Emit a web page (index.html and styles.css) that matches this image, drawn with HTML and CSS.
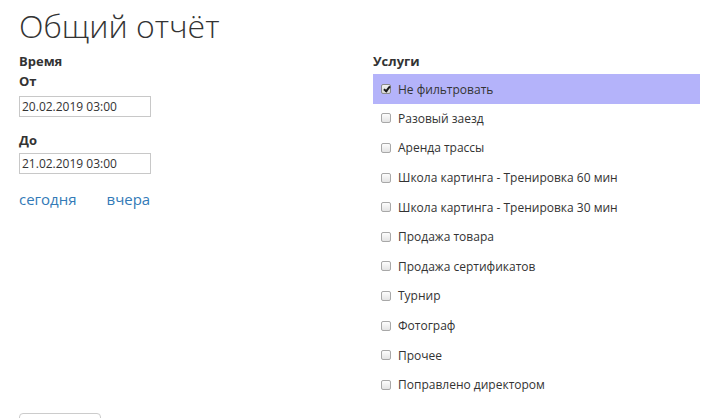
FILE: index.html
```html
<!DOCTYPE html>
<html lang="ru">
<head>
<meta charset="utf-8">
<title>Общий отчёт</title>
<link rel="stylesheet" href="styles.css">
</head>
<body>
<div class="page">
  <h1 class="title">Общий отчёт</h1>
  <div class="columns">
    <div class="col-left">
      <div class="label">Время</div>
      <div class="label">От</div>
      <div class="field field-first"><input class="date-input" type="text" value="20.02.2019 03:00"></div>
      <div class="label label-gap">До</div>
      <div class="field field-second"><input class="date-input" type="text" value="21.02.2019 03:00"></div>
      <div class="quick-links">
        <a class="quick-link" href="#">сегодня</a>
        <a class="quick-link" href="#">вчера</a>
      </div>
    </div>
    <div class="col-right">
      <div class="label">Услуги</div>
      <ul class="service-list">
        <li class="service selected"><span class="cb checked"></span><span class="service-name">Не фильтровать</span></li>
        <li class="service"><span class="cb"></span><span class="service-name">Разовый заезд</span></li>
        <li class="service"><span class="cb"></span><span class="service-name">Аренда трассы</span></li>
        <li class="service"><span class="cb"></span><span class="service-name">Школа картинга - Тренировка 60 мин</span></li>
        <li class="service"><span class="cb"></span><span class="service-name">Школа картинга - Тренировка 30 мин</span></li>
        <li class="service"><span class="cb"></span><span class="service-name">Продажа товара</span></li>
        <li class="service"><span class="cb"></span><span class="service-name">Продажа сертификатов</span></li>
        <li class="service"><span class="cb"></span><span class="service-name">Турнир</span></li>
        <li class="service"><span class="cb"></span><span class="service-name">Фотограф</span></li>
        <li class="service"><span class="cb"></span><span class="service-name">Прочее</span></li>
        <li class="service"><span class="cb"></span><span class="service-name">Поправлено директором</span></li>
      </ul>
    </div>
  </div>
  <button class="submit-btn" type="button">Показать</button>
</div>
</body>
</html>
```

FILE: styles.css
```css
html, body {
  margin: 0;
  padding: 0;
  background: #ffffff;
}

body {
  font-family: "Open Sans", "Noto Sans", sans-serif;
  color: #333333;
  overflow: hidden;
}

.page {
  padding: 0 0 0 19px;
}

.title {
  margin: 6px 0 0;
  font-size: 32px;
  line-height: 40px;
  font-weight: 300;
  color: #333333;
}

.columns {
  display: flex;
  margin-top: 5px;
}

.col-left {
  width: 354px;
}

.col-right {
  width: 327px;
}

.label {
  font-size: 13px;
  line-height: 20px;
  font-weight: 700;
  color: #333333;
}

.label-gap {
  margin-top: 13px;
}

.field-first {
  margin-top: 5px;
}

.field-second {
  margin-top: 3px;
}

.date-input {
  display: block;
  box-sizing: border-box;
  width: 132px;
  height: 21px;
  margin: 0;
  padding: 0 2px;
  border: 1px solid #c8c8c8;
  border-radius: 0;
  font-family: "Open Sans", "Noto Sans", sans-serif;
  font-size: 12px;
  color: #333333;
  background: #ffffff;
  outline: none;
}

.quick-links {
  display: flex;
  gap: 30px;
  margin-top: 15px;
  line-height: 20px;
}

.quick-link {
  font-size: 15px;
  color: #337ab7;
  text-decoration: none;
}

.service-list {
  list-style: none;
  margin: 3px 0 0;
  padding: 0;
}

.service {
  display: flex;
  align-items: center;
  height: 29.6px;
  padding-left: 8px;
  font-size: 12px;
  color: #333333;
}

.service:first-child {
  padding-top: 1px;
  box-sizing: border-box;
}

.service.selected {
  background: #b4b3fa;
}

.cb {
  position: relative;
  box-sizing: border-box;
  width: 10px;
  height: 10px;
  margin-right: 7px;
  border: 1px solid #a8a8a8;
  border-radius: 2px;
  background: linear-gradient(#fdfdfd, #e4e4e4);
  flex: none;
}

.cb.checked {
  background: linear-gradient(#f0f0f0, #d8d8d8);
  border-color: #8a8a8a;
}

.cb.checked::after {
  content: "";
  position: absolute;
  left: 2.5px;
  top: 0px;
  width: 2px;
  height: 5px;
  border: solid #1a1a1a;
  border-width: 0 2px 2px 0;
  transform: rotate(38deg);
}

.service-name {
  line-height: 17px;
}

.submit-btn {
  display: block;
  box-sizing: border-box;
  width: 82px;
  height: 30px;
  margin-top: 13px;
  padding: 0;
  border: 1px solid #cccccc;
  border-radius: 4px;
  background: #ffffff;
  font-family: "Open Sans", "Noto Sans", sans-serif;
  font-size: 13px;
  color: #333333;
}
```
